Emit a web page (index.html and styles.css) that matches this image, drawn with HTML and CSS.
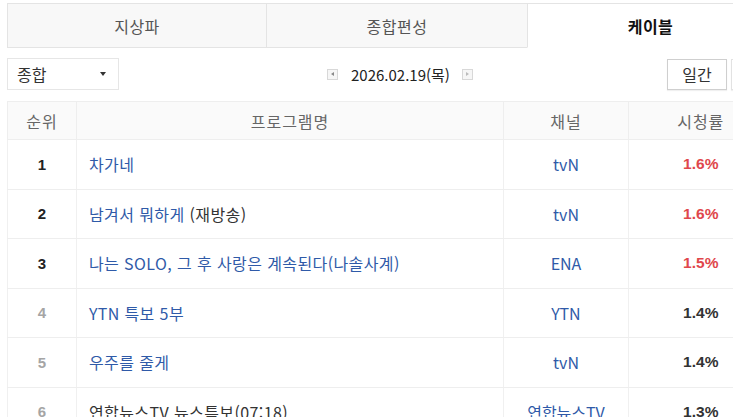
FILE: index.html
```html
<!DOCTYPE html>
<html lang="ko">
<head>
<meta charset="utf-8">
<title>시청률</title>
<link rel="stylesheet" href="styles.css">
</head>
<body>
<div class="page">
  <div class="inner">
    <div class="tabs">
      <div class="tab">지상파</div>
      <div class="tab">종합편성</div>
      <div class="tab active">케이블</div>
    </div>
    <div class="toolbar">
      <div class="select">종합<span class="caret"></span></div>
      <div class="date">
        <span class="arrow"><span class="tri left"></span></span>
        <span class="date-text">2026.02.19(목)</span>
        <span class="arrow"><span class="tri right"></span></span>
      </div>
      <div class="periods">
        <span class="pbtn">일간</span>
        <span class="pbtn edge"></span>
      </div>
    </div>
    <table class="rank">
      <colgroup>
        <col class="c-rank"><col class="c-prog"><col class="c-ch"><col class="c-rate">
      </colgroup>
      <thead>
        <tr><th>순위</th><th>프로그램명</th><th>채널</th><th>시청률</th></tr>
      </thead>
      <tbody>
        <tr><td class="num top">1</td><td class="prog">차가네</td><td class="ch">tvN</td><td class="rate hot">1.6%</td></tr>
        <tr><td class="num top">2</td><td class="prog">남겨서 뭐하게 <span class="dark">(재방송)</span></td><td class="ch">tvN</td><td class="rate hot">1.6%</td></tr>
        <tr><td class="num top">3</td><td class="prog">나는 SOLO, 그 후 사랑은 계속된다(나솔사계)</td><td class="ch">ENA</td><td class="rate hot">1.5%</td></tr>
        <tr><td class="num">4</td><td class="prog">YTN 특보 5부</td><td class="ch">YTN</td><td class="rate">1.4%</td></tr>
        <tr><td class="num">5</td><td class="prog">우주를 줄게</td><td class="ch">tvN</td><td class="rate">1.4%</td></tr>
        <tr><td class="num">6</td><td class="prog dark">연합뉴스TV 뉴스특보(07:18)</td><td class="ch">연합뉴스TV</td><td class="rate">1.3%</td></tr>
      </tbody>
    </table>
  </div>
</div>
</body>
</html>
```
FILE: styles.css
```css
* { box-sizing: border-box; }
html, body { margin: 0; padding: 0; background: #fff; }
body {
  font-family: "Noto Sans CJK KR", "Noto Sans", sans-serif;
  color: #333;
  overflow: hidden;
}
.page {
  margin: 3px 0 0 7px;
  width: 726px;
  height: 414px;
  overflow: hidden;
}
.inner { width: 766px; }

.tabs {
  display: grid;
  grid-template-columns: 259px 261px 1fr;
  height: 45px;
  border-top: 1px solid #e4e4e4;
}
.tab {
  display: flex;
  align-items: center;
  justify-content: center;
  font-size: 16px;
  letter-spacing: 0.5px;
  color: #555;
  background: #f8f8f8;
  border-left: 1px solid #e4e4e4;
  border-bottom: 1px solid #e4e4e4;
}
.tab.active {
  background: #fff;
  color: #111;
  font-weight: 700;
  border-bottom-color: transparent;
}

.toolbar {
  display: flex;
  align-items: center;
  margin-top: 10px;
  height: 32px;
}
.toolbar > * { flex-shrink: 0; }
.select {
  width: 112px;
  height: 32px;
  border: 1px solid #e6e6e6;
  display: flex;
  align-items: center;
  justify-content: space-between;
  padding: 0 12px 0 9px;
  font-size: 16px;
  color: #333;
}
.caret {
  width: 0; height: 0;
  border-left: 3px solid transparent;
  border-right: 3px solid transparent;
  border-top: 4px solid #333;
}
.date {
  display: flex;
  align-items: center;
  margin-left: 208px;
}
.arrow {
  width: 11px;
  height: 11px;
  border: 1px solid #d8d8d8;
  background: #f6f6f6;
  display: flex;
  align-items: center;
  justify-content: center;
  flex-shrink: 0;
}
.tri { width: 0; height: 0; border-top: 2.5px solid transparent; border-bottom: 2.5px solid transparent; }
.tri.left { border-right: 3px solid #888; }
.tri.right { border-left: 3px solid #bbb; }
.date-text {
  font-size: 15px;
  color: #222;
  margin: 0 12px 0 13px;
  white-space: nowrap;
}
.periods {
  display: flex;
  gap: 4px;
  margin-left: 194px;
}
.pbtn {
  width: 60px;
  height: 31px;
  border: 1px solid #cfcfcf;
  box-shadow: 0 1px 1px rgba(0,0,0,0.06);
  display: flex;
  align-items: center;
  justify-content: center;
  font-size: 16px;
  color: #333;
  flex-shrink: 0;
}
.pbtn.edge { border-color: #e2e2e2; }

.rank {
  margin-top: 11px;
  border-collapse: collapse;
  width: 765px;
  table-layout: fixed;
}
.c-rank { width: 69px; }
.c-prog { width: 427px; }
.c-ch { width: 125px; }
.c-rate { width: 144px; }
.rank th {
  height: 38px;
  background: #fafafa;
  font-weight: 400;
  font-size: 16px;
  letter-spacing: 1px;
  color: #666;
  border-top: 1px solid #eeeeee;
  border-bottom: 1px solid #eeeeee;
  border-left: 1px solid #eeeeee;
  text-align: center;
  padding: 0;
}
.rank td {
  height: 49.5px;
  border-bottom: 1px solid #eeeeee;
  border-left: 1px solid #f0f0f0;
  font-size: 16px;
  padding: 0;
  text-align: center;
  white-space: nowrap;
}
.rank td.num {
  font-family: "Liberation Sans", "Noto Sans", sans-serif;
  font-weight: 700;
  font-size: 15px;
  color: #a5a5a5;
}
.rank td.num.top { color: #222; }
.rank td.prog {
  text-align: left;
  padding-left: 12px;
  letter-spacing: 0.4px;
  color: #2f5aa8;
}
.rank td.prog.dark, .dark { color: #333; }
.rank td.ch { color: #2f5aa8; }
.rank td.rate {
  font-family: "Liberation Sans", "Noto Sans", sans-serif;
  font-weight: 700;
  font-size: 15.5px;
  color: #333;
}
.rank td.rate.hot { color: #e0474c; }
```
